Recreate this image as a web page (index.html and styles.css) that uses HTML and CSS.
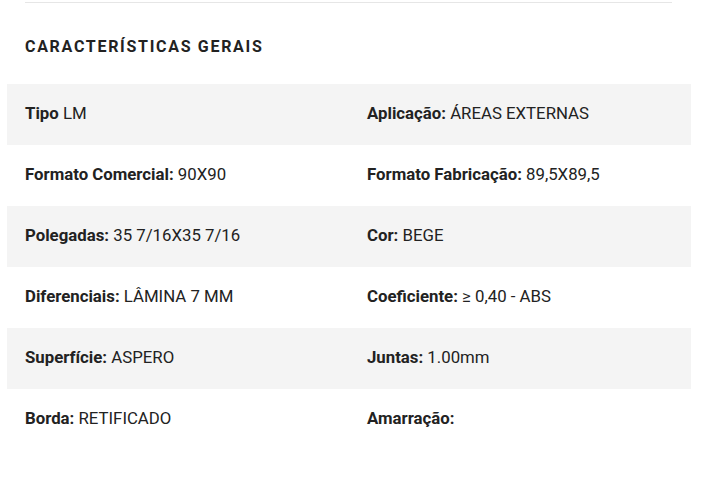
FILE: index.html
```html
<!DOCTYPE html>
<html lang="pt">
<head>
<meta charset="utf-8">
<link rel="stylesheet" href="styles.css">
</head>
<body>
<div class="wrap">
  <div class="rule"></div>
  <h2 class="title">CARACTERÍSTICAS GERAIS</h2>
  <div class="table">
    <div class="row shade">
      <div class="cell"><b>Tipo</b> LM</div>
      <div class="cell"><b>Aplicação:</b> ÁREAS EXTERNAS</div>
    </div>
    <div class="row">
      <div class="cell"><b>Formato Comercial:</b> 90X90</div>
      <div class="cell"><b>Formato Fabricação:</b> 89,5X89,5</div>
    </div>
    <div class="row shade">
      <div class="cell"><b>Polegadas:</b> 35 7/16X35 7/16</div>
      <div class="cell"><b>Cor:</b> BEGE</div>
    </div>
    <div class="row">
      <div class="cell"><b>Diferenciais:</b> LÂMINA 7 MM</div>
      <div class="cell"><b>Coeficiente:</b> ≥ 0,40 - ABS</div>
    </div>
    <div class="row shade">
      <div class="cell"><b>Superfície:</b> ASPERO</div>
      <div class="cell"><b>Juntas:</b> 1.00mm</div>
    </div>
    <div class="row">
      <div class="cell"><b>Borda:</b> RETIFICADO</div>
      <div class="cell"><b>Amarração:</b> </div>
    </div>
  </div>
</div>
</body>
</html>
```
FILE: styles.css
```css
html, body {
  margin: 0;
  padding: 0;
  background: #fff;
}
body {
  font-family: Roboto, "Liberation Sans", sans-serif;
  color: #222;
}
.wrap {
  width: 684px;
  margin-left: 7px;
}
.rule {
  margin: 2px 18px 0;
  width: 647px;
  height: 1px;
  background: #e6e6e6;
}
.title {
  margin: 0;
  padding: 5px 18px 0;
  height: 76px;
  display: flex;
  align-items: center;
  font-size: 16px;
  font-weight: 700;
  letter-spacing: 1.7px;
  color: #222;
}
.table {
  display: flex;
  flex-direction: column;
}
.row {
  display: grid;
  grid-template-columns: 342px 342px;
  height: 61px;
  align-items: center;
}
.row.shade {
  background: #f4f4f4;
}
.cell {
  padding: 0 0 3px 18px;
  font-size: 16.8px;
  line-height: 20px;
}
.cell b {
  font-weight: 700;
}
```
